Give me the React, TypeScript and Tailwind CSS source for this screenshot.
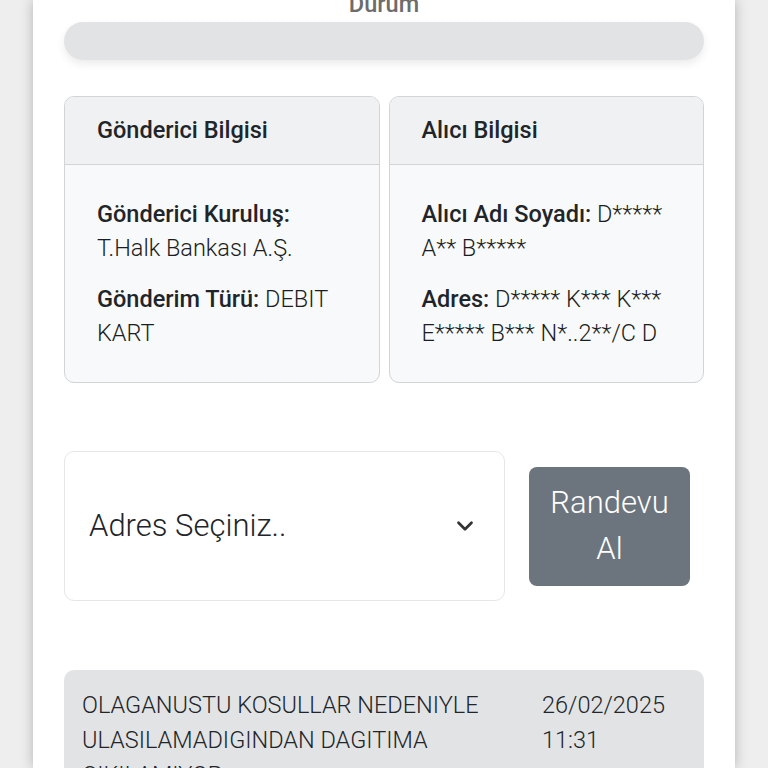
import { ChevronDown } from 'lucide-react';

const font = { fontFamily: 'Roboto, "Noto Sans", sans-serif' };

function InfoCard({ title, rows }: { title: string; rows: { label: string; value: string }[] }) {
  return (
    <div className="flex-1 rounded-[10px] border border-[#d3d4d6] bg-[#f8f9fa] overflow-hidden">
      <div className="h-[68px] flex items-center px-[32px] bg-[#f0f1f2] border-b border-[#d3d4d6]">
        <span className="text-[23.5px] font-medium text-[#212529] pt-[1px]">{title}</span>
      </div>
      <div className="px-[32px] pt-[32px] pb-[32px] flex flex-col gap-[17px]">
        {rows.map((r) => (
          <p key={r.label} className="text-[23.5px] leading-[34px] font-light text-[#1a1d21]">
            <span className="font-medium text-[#212529]">{r.label}</span> {r.value}
          </p>
        ))}
      </div>
    </div>
  );
}

export default function App() {
  return (
    <div className="min-h-screen h-[768px] overflow-hidden bg-[#eeeeee] flex justify-center" style={font}>
      <div className="w-[702px] bg-white shadow-[0_0_12px_rgba(0,0,0,0.25)] px-[31px]">
        <div className="-mt-[11px] text-center text-[23.5px] leading-[30px] font-medium text-[#6c6c6c]">Durum</div>
        <div className="mt-[3px] h-[38px] rounded-full bg-[#e2e3e5] shadow-[0_4px_8px_rgba(0,0,0,0.08)]" />

        <div className="mt-[36px] flex gap-[9px]">
          <InfoCard
            title="Gönderici Bilgisi"
            rows={[
              { label: 'Gönderici Kuruluş:', value: 'T.Halk Bankası A.Ş.' },
              { label: 'Gönderim Türü:', value: 'DEBIT KART' },
            ]}
          />
          <InfoCard
            title="Alıcı Bilgisi"
            rows={[
              { label: 'Alıcı Adı Soyadı:', value: 'D***** A** B*****' },
              { label: 'Adres:', value: 'D***** K*** K*** E***** B*** N*..2**/C D' },
            ]}
          />
        </div>

        <div className="mt-[68px] flex items-center gap-[24px]">
          <div className="w-[441px] h-[150px] rounded-[10px] border border-[#e5e6e8] bg-white flex items-center justify-between pl-[24px] pr-[26px]">
            <span className="text-[31px] font-light text-[#212529]">Adres Seçiniz..</span>
            <ChevronDown className="w-[26px] h-[26px] text-[#333]" strokeWidth={2.5} />
          </div>
          <button className="w-[161px] h-[119px] rounded-[8px] bg-[#6c757d] text-white text-[31px] font-light leading-[46px] px-[18px]">
            Randevu Al
          </button>
        </div>

        <div className="mt-[69px] rounded-t-[10px] bg-[#e2e3e5] px-[18px] pt-[18px] flex">
          <div className="w-[460px] text-[23.5px] leading-[35px] font-light text-[#212529] uppercase">
            OLAGANUSTU KOSULLAR NEDENIYLE ULASILAMADIGINDAN DAGITIMA CIKILAMIYOR
          </div>
          <div className="text-[23.5px] leading-[35px] font-light text-[#212529]">
            26/02/2025<br />11:31
          </div>
        </div>
      </div>
    </div>
  );
}
